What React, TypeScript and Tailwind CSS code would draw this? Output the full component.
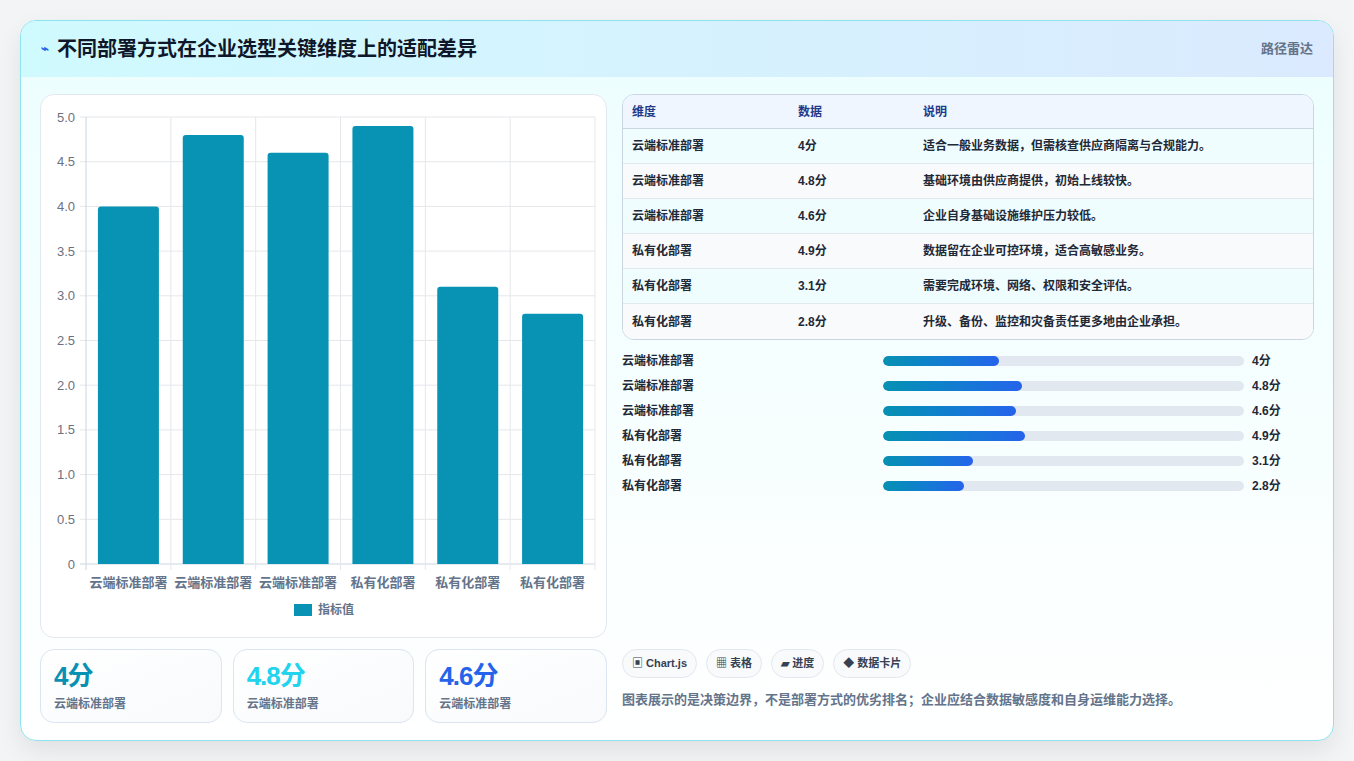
import React from "react";

const rows = [
  ["云端标准部署", 4, "4分", "适合一般业务数据，但需核查供应商隔离与合规能力。"],
  ["云端标准部署", 4.8, "4.8分", "基础环境由供应商提供，初始上线较快。"],
  ["云端标准部署", 4.6, "4.6分", "企业自身基础设施维护压力较低。"],
  ["私有化部署", 4.9, "4.9分", "数据留在企业可控环境，适合高敏感业务。"],
  ["私有化部署", 3.1, "3.1分", "需要完成环境、网络、权限和安全评估。"],
  ["私有化部署", 2.8, "2.8分", "升级、备份、监控和灾备责任更多地由企业承担。"],
] as const;

function Chart() {
  const x0 = 45, x1 = 554, y0 = 22, y1 = 469;
  const cw = (x1 - x0) / 6;
  const ticks = [0, 0.5, 1, 1.5, 2, 2.5, 3, 3.5, 4, 4.5, 5];
  const yv = (v: number) => y1 - (v / 5) * (y1 - y0);
  return (
    <svg width="566" height="541" className="block" style={{ fontFamily: '"Liberation Sans","Noto Sans CJK SC",sans-serif' }}>
      {ticks.map((t) => (
        <g key={t}>
          <line x1={x0 - 6} x2={x1} y1={yv(t)} y2={yv(t)} stroke={t === 0 ? "#cbd5e1" : "#e5e7eb"} />
          <text x={x0 - 11} y={yv(t) + 4.5} textAnchor="end" fontSize="13" fill="#6b7280">{t === 0 ? "0" : t.toFixed(1)}</text>
        </g>
      ))}
      {Array.from({ length: 7 }).map((_, i) => (
        <line key={i} x1={x0 + i * cw} x2={x0 + i * cw} y1={y0} y2={y1 + 6} stroke={i === 0 ? "#cbd5e1" : "#e5e7eb"} />
      ))}
      {rows.map((r, i) => {
        const cx = x0 + i * cw + cw / 2;
        const top = yv(r[1]);
        return (
          <g key={i}>
            <path d={`M${cx - 30.5} ${y1} V${top + 3} Q${cx - 30.5} ${top} ${cx - 27.5} ${top} H${cx + 27.5} Q${cx + 30.5} ${top} ${cx + 30.5} ${top + 3} V${y1} Z`} fill="#0893b4" />
            <text x={cx} y={492} textAnchor="middle" fontSize="13" fontWeight="bold" fill="#64748b">{r[0]}</text>
          </g>
        );
      })}
      <rect x="253" y="509" width="18" height="12" fill="#0893b4" />
      <text x="277" y="519" fontSize="12" fontWeight="bold" fill="#64748b">指标值</text>
    </svg>
  );
}

export default function App() {
  const stats = [
    ["4分", "text-[#0891b2]"],
    ["4.8分", "text-[#22d3ee]"],
    ["4.6分", "text-[#2563eb]"],
  ];
  return (
    <div className="w-[1354px] h-[761px] bg-[#f3f4f6] p-[20px] pb-0" style={{ fontFamily: '"Liberation Sans","Noto Sans CJK SC",sans-serif' }}>
      <div className="w-[1314px] h-[721px] rounded-[16px] border border-[#8ee3ef] bg-gradient-to-b from-[#ecfeff] to-white shadow-[0_10px_25px_rgba(0,0,0,0.08)] overflow-hidden flex flex-col">
        <div className="h-[56px] shrink-0 flex items-center justify-between px-[20px] bg-gradient-to-r from-[#cffafe] to-[#dbeafe]">
          <div className="flex items-center gap-[8px]">
            <span className="text-[#2563eb] text-[13px] font-bold">⌁</span>
            <span className="text-[20px] font-bold text-[#0f172a]">不同部署方式在企业选型关键维度上的适配差异</span>
          </div>
          <span className="text-[13px] font-bold text-[#64748b]">路径雷达</span>
        </div>
        <div className="flex gap-[15px] px-[19px] pt-[17px]">
          <div className="w-[567px] flex flex-col gap-[11px]">
            <div className="h-[544px] rounded-[14px] border border-[#e2e8f0] bg-white">
              <Chart />
            </div>
            <div className="grid grid-cols-3 gap-[11px]">
              {stats.map(([v, c], i) => (
                <div key={i} className="h-[74px] rounded-[14px] border border-[#dbe4f0] bg-gradient-to-br from-white to-[#f8fafc] px-[13px] pt-[9px]">
                  <div className={`text-[26px] font-bold leading-[34px] tracking-[-1px] ${c}`}>{v}</div>
                  <div className="text-[12px] font-bold text-[#64748b] mt-[2px]">云端标准部署</div>
                </div>
              ))}
            </div>
          </div>
          <div className="flex-1 flex flex-col h-[627px]">
            <div className="rounded-[12px] border border-[#cbd5e1] overflow-hidden text-[12px] font-bold">
              <div className="flex h-[34px] items-center bg-[#eff6ff] text-[#1e3a8a] border-b border-[#cbd5e1]">
                <div className="w-[166px] pl-[9px]">维度</div>
                <div className="w-[125px] pl-[9px]">数据</div>
                <div className="flex-1 pl-[9px]">说明</div>
              </div>
              {rows.map((r, i) => (
                <div key={i} className={`flex h-[35px] items-center text-[#1f2937] ${i < 5 ? "border-b border-[#e2e8f0]" : ""} ${i % 2 === 0 ? "bg-[#f0fdff]" : "bg-[#f8fafc]"}`}>
                  <div className="w-[166px] pl-[9px]">{r[0]}</div>
                  <div className="w-[125px] pl-[9px]">{r[2]}</div>
                  <div className="flex-1 pl-[9px]">{r[3]}</div>
                </div>
              ))}
            </div>
            <div className="flex flex-col mt-[8px]">
              {rows.map((r, i) => (
                <div key={i} className="flex items-center h-[25px] text-[12px] font-bold text-[#1f2937]">
                  <div className="w-[261px]">{r[0]}</div>
                  <div className="w-[361px] h-[10px] rounded-full bg-[#e2e8f0] overflow-hidden">
                    <div className="h-full rounded-full bg-gradient-to-r from-[#0891b2] to-[#2563eb]" style={{ width: `${r[1] * 8}%` }} />
                  </div>
                  <div className="ml-[8px]">{r[2]}</div>
                </div>
              ))}
            </div>
            <div className="mt-auto flex flex-col gap-[12px]">
              <div className="flex gap-[9px]">
                {["▣ Chart.js", "▦ 表格", "▰ 进度", "◆ 数据卡片"].map((t) => (
                  <span key={t} className="h-[29px] px-[9px] flex items-center rounded-full border border-[#e2e8f0] bg-[#f8fafc] text-[11px] font-bold text-[#374151]">{t}</span>
                ))}
              </div>
              <div className="text-[13px] font-bold text-[#64748b] mb-[12px]">图表展示的是决策边界，不是部署方式的优劣排名；企业应结合数据敏感度和自身运维能力选择。</div>
            </div>
          </div>
        </div>
      </div>
    </div>
  );
}
